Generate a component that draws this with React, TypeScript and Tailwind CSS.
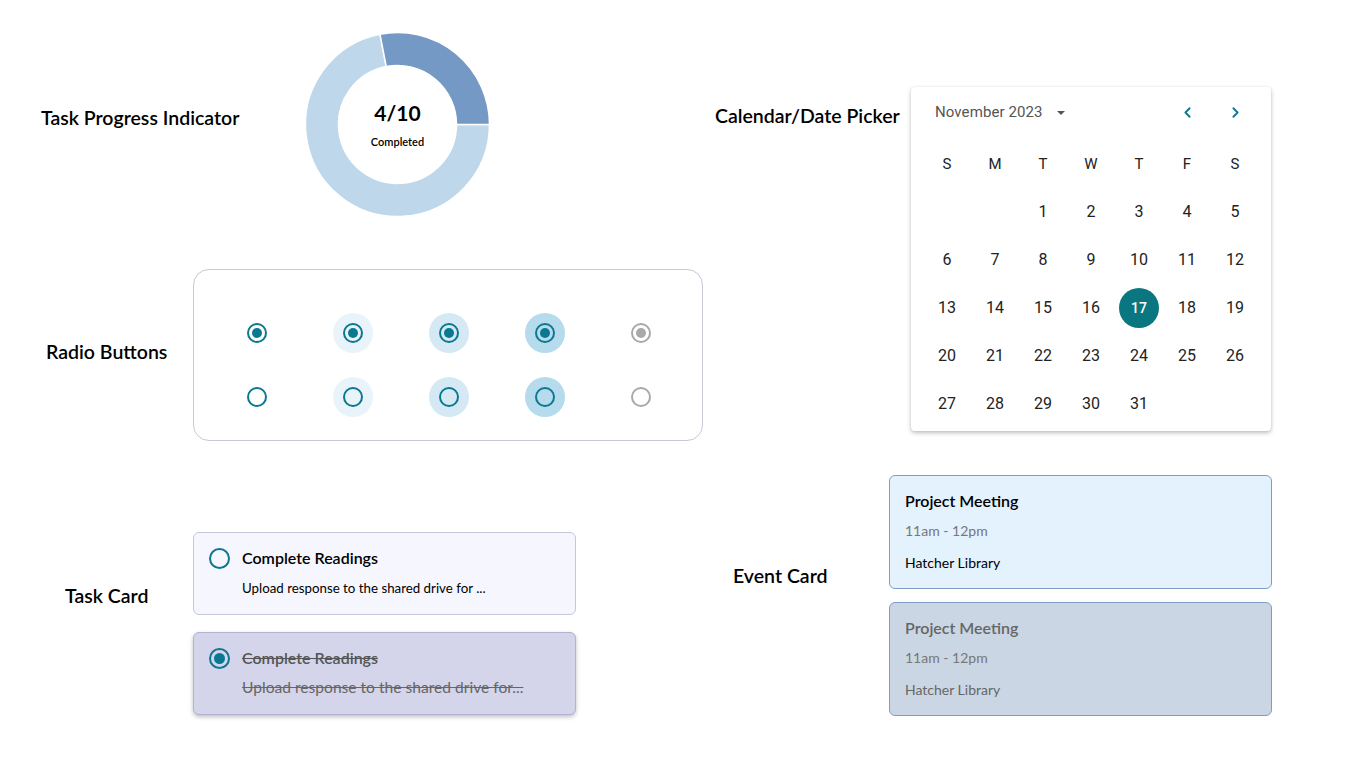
import { ChevronLeft, ChevronRight } from "lucide-react";

const sans = "font-['Lato','Open_Sans',sans-serif]";

const halos = ["bg-transparent", "bg-[#e9f4fa]", "bg-[#d4e9f4]", "bg-[#b5dbec]"];

function Radio({ checked, halo = "bg-transparent", disabled = false }: { checked: boolean; halo?: string; disabled?: boolean }) {
  const ring = disabled ? "border-[#a9a9a9]" : "border-[#0b7891]";
  const dot = disabled ? "bg-[#a9a9a9]" : "bg-[#0b7891]";
  return (
    <div className={`grid h-10 w-10 place-items-center rounded-full ${halo}`}>
      <div className={`grid h-5 w-5 place-items-center rounded-full border-2 ${ring}`}>
        {checked && <div className={`h-2.5 w-2.5 rounded-full ${dot}`} />}
      </div>
    </div>
  );
}

function Donut() {
  return (
    <div className="relative h-[185px] w-[185px]">
      <svg width="185" height="185" viewBox="0 0 185 185">
        <g transform="translate(0.5 0.5)">
          <path
            d="M 184 92 A 92 92 0 1 1 74.45 1.69 L 80.74 34.08 A 59 59 0 1 0 151 92 Z"
            fill="#bed7ea"
            stroke="#fff"
            strokeWidth="1.5"
          />
          <path
            d="M 74.45 1.69 A 92 92 0 0 1 184 92 L 151 92 A 59 59 0 0 0 80.74 34.08 Z"
            fill="#7599c5"
            stroke="#fff"
            strokeWidth="1.5"
          />
        </g>
      </svg>
      <div className="absolute inset-0 flex flex-col items-center justify-center">
        <div className="mt-[-1px] text-[21px] font-bold leading-none text-black">4/10</div>
        <div className="mt-[13px] text-[11px] font-semibold leading-none text-black">Completed</div>
      </div>
    </div>
  );
}

const weeks: (number | null)[][] = [
  [null, null, 1, 2, 3, 4, 5],
  [6, 7, 8, 9, 10, 11, 12],
  [13, 14, 15, 16, 17, 18, 19],
  [20, 21, 22, 23, 24, 25, 26],
  [27, 28, 29, 30, 31, null, null],
];

function Calendar() {
  return (
    <div className="w-[360px] rounded-[4px] bg-white px-3 pb-[3px] font-['Roboto',sans-serif] shadow-[0_2px_4px_rgba(0,0,0,0.25),0_0_2px_rgba(0,0,0,0.08)]">
      <div className="flex h-[53px] items-center">
        <span className="ml-3 mt-[-2px] text-[15px] tracking-[0.1px] text-[#555]">November 2023</span>
        <span className="ml-[14px] mt-[-1px] h-0 w-0 border-x-[4px] border-t-[4px] border-x-transparent border-t-[#555]" />
        <div className="ml-auto mt-[-2px] flex">
          <div className="grid h-12 w-12 place-items-center">
            <ChevronLeft size={17} strokeWidth={2.6} className="text-[#0b7891]" />
          </div>
          <div className="grid h-12 w-12 place-items-center">
            <ChevronRight size={17} strokeWidth={2.6} className="text-[#0b7891]" />
          </div>
        </div>
      </div>
      <div className="grid grid-cols-7">
        {["S", "M", "T", "W", "T", "F", "S"].map((d, i) => (
          <div key={i} className="grid h-12 place-items-center text-[15px] text-[#222]">
            {d}
          </div>
        ))}
        {weeks.flat().map((n, i) => (
          <div key={i} className="grid h-12 place-items-center">
            {n === 17 ? (
              <div className="grid h-10 w-10 place-items-center rounded-full bg-[#0a7780] text-[14px] font-medium text-white">
                {n}
              </div>
            ) : (
              <span className="text-[16px] text-[#222]">{n ?? ""}</span>
            )}
          </div>
        ))}
      </div>
    </div>
  );
}

function TaskCard({ done }: { done: boolean }) {
  return (
    <div
      className={`h-[83px] w-[383px] rounded-[6px] border px-[15px] pt-[15px] ${
        done
          ? "border-[#b0b2cf] bg-[#d4d5ea] shadow-[0_2px_4px_rgba(0,0,0,0.25)]"
          : "border-[#c6c7dd] bg-[#f5f6fe]"
      }`}
    >
      <div className="flex items-center gap-[12px]">
        <div className="grid h-[21px] w-[21px] place-items-center rounded-full border-2 border-[#0b7891]">
          {done && <div className="h-[11px] w-[11px] rounded-full bg-[#0b7891]" />}
        </div>
        <span className={`mt-[-1px] text-[16px] font-semibold leading-5 ${done ? "text-[#555] line-through" : "text-black"}`}>
          Complete Readings
        </span>
      </div>
      {done ? (
        <div className="mt-[8px] pl-[33px] text-[15.6px] leading-5 text-[#666] line-through">
          Upload response to the shared drive for...
        </div>
      ) : (
        <div className="mt-[9px] pl-[33px] text-[13.3px] leading-5 text-black">
          Upload response to the shared drive for ...
        </div>
      )}
    </div>
  );
}

function EventCard({ past }: { past: boolean }) {
  return (
    <div
      className={`h-[114px] w-[383px] rounded-[6px] border px-[15px] pt-[15px] ${
        past ? "border-[#7f9dc3] bg-[#cad6e3]" : "border-[#7f9dc3] bg-[#e3f2fd]"
      }`}
    >
      <div className={`text-[16px] font-semibold leading-5 ${past ? "text-[#666]" : "text-black"}`}>Project Meeting</div>
      <div className="mt-[10px] text-[14px] leading-5 text-[#777]">11am - 12pm</div>
      <div className={`mt-[12px] text-[14px] leading-5 ${past ? "text-[#666]" : "text-black"}`}>Hatcher Library</div>
    </div>
  );
}

export default function App() {
  return (
    <div className={`flex h-[768px] w-[1366px] bg-white ${sans}`}>
      {/* left column */}
      <div className="flex w-[715px] flex-col pt-[32px]">
        <div className="flex h-[185px] items-center">
          <div className="mb-[14px] w-[305px] pl-[41px] text-[19.5px] font-semibold text-black">Task Progress Indicator</div>
          <Donut />
        </div>
        <div className="mt-[52px] flex h-[172px] items-start">
          <div className="mt-[68px] w-[193px] pl-[46px] text-[19.5px] font-semibold text-black">Radio Buttons</div>
          <div className="flex h-[172px] w-[510px] flex-col gap-6 rounded-[16px] border border-[#c9c8d6] pl-[43px] pt-[43px]">
            {[true, false].map((c) => (
              <div key={String(c)} className="flex gap-14">
                {halos.map((h) => (
                  <Radio key={h} checked={c} halo={h} />
                ))}
                <Radio checked={c} disabled />
              </div>
            ))}
          </div>
        </div>
        <div className="mt-[91px] flex">
          <div className="mt-[49px] w-[193px] pl-[65px] text-[19.5px] font-semibold text-black">Task Card</div>
          <div className="flex flex-col gap-[17px]">
            <TaskCard done={false} />
            <TaskCard done />
          </div>
        </div>
      </div>
      {/* right column */}
      <div className="flex flex-col pt-[87px]">
        <div className="flex">
          <div className="mt-[14px] w-[196px] text-[19.5px] font-semibold text-black">Calendar/Date Picker</div>
          <Calendar />
        </div>
        <div className="mt-[44px] flex">
          <div className="mt-[86px] w-[174px] pl-[18px] text-[19.5px] font-semibold text-black">Event Card</div>
          <div className="flex flex-col gap-[13px]">
            <EventCard past={false} />
            <EventCard past />
          </div>
        </div>
      </div>
    </div>
  );
}
